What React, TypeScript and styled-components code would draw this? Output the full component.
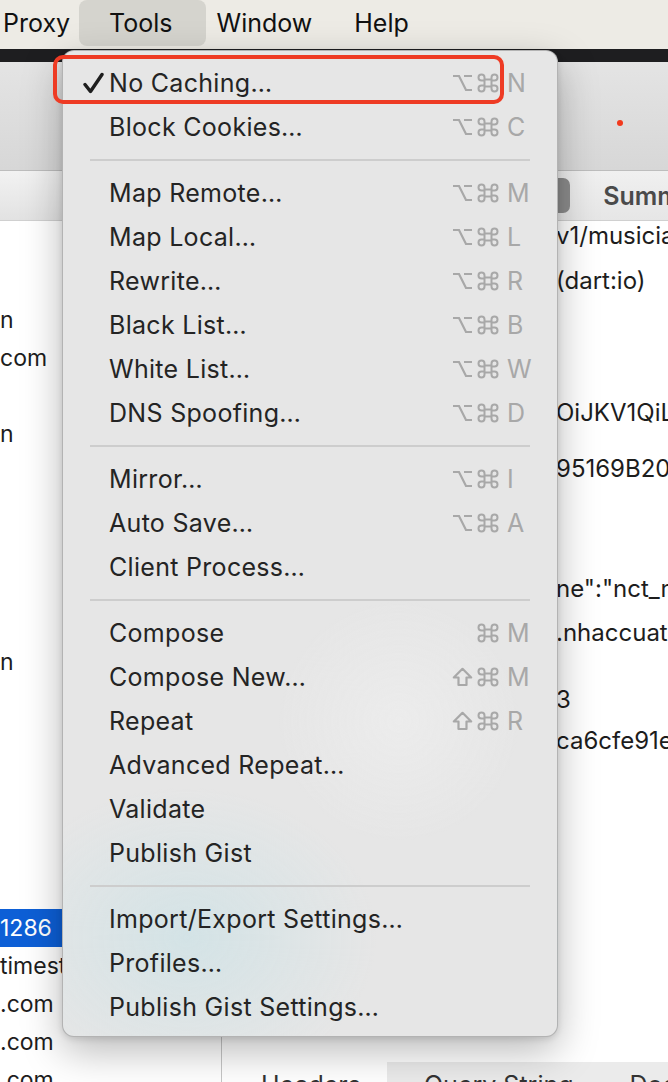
import styled, { createGlobalStyle } from "styled-components";

const GlobalStyle = createGlobalStyle`
  html, body {
    margin: 0;
    padding: 0;
    width: 668px;
    height: 1082px;
    overflow: hidden;
    background: #fff;
  }
  body {
    font-family: Inter, "Noto Sans", sans-serif;
    -webkit-font-smoothing: antialiased;
  }
`;

const Screen = styled.div`
  position: relative;
  width: 668px;
  height: 1082px;
  overflow: hidden;
  display: flex;
  flex-direction: column;
`;

/* ---------- top menu bar ---------- */
const MenuBar = styled.div`
  height: 49px;
  flex: none;
  display: flex;
  align-items: flex-start;
  background: #edebe5;
`;
const MenuTitle = styled.div<{ $active?: boolean; $first?: boolean }>`
  height: 46px;
  display: flex;
  align-items: center;
  font-size: 25px;
  color: #111;
  padding: ${(p) => (p.$active ? "0 33px 0 30px" : "0 21px")};
  margin: ${(p) => (p.$active ? "0 -10px 0 -12px" : p.$first ? "0 0 0 -18px" : "0")};
  background: ${(p) => (p.$active ? "#d5d4ce" : "transparent")};
  border-radius: 8px;
`;

/* ---------- app window behind ---------- */
const TitleStrip = styled.div`
  height: 13px;
  flex: none;
  background: #1e1e20;
`;
const Toolbar = styled.div`
  height: 109px;
  flex: none;
  display: flex;
  justify-content: flex-end;
  align-items: center;
  padding: 14px 45px 0 0;
  box-sizing: border-box;
  background: linear-gradient(#e4e4e4, #d7d7d7);
  border-bottom: 1px solid #bdbdbd;
`;
const RecordDot = styled.span`
  width: 6px;
  height: 6px;
  border-radius: 50%;
  background: #f2391d;
`;
const HeaderRow = styled.div`
  height: 50px;
  flex: none;
  display: grid;
  grid-template-columns: 222px 1fr;
  border-bottom: 1px solid #d0d0d0;
  box-sizing: border-box;
`;
const SideHeader = styled.div`
  background: linear-gradient(#f2f2f2, #e2e2e2);
  border-right: 1px solid #c8c8c8;
`;
const TabsHeader = styled.div`
  display: flex;
  align-items: center;
  padding-left: 179px;
  background: linear-gradient(#f0f0f0, #e6e6e6);
`;
const Segment = styled.div<{ $selected?: boolean }>`
  height: 35px;
  display: flex;
  align-items: center;
  padding: ${(p) => (p.$selected ? "0 34px 0 20px" : "0 33px")};
  border-radius: 7px;
  background: ${(p) => (p.$selected ? "#8c8c8c" : "transparent")};
  color: ${(p) => (p.$selected ? "#fff" : "#4a4a4a")};
  font-size: 25px;
  font-weight: 600;
  white-space: nowrap;
`;

const Body = styled.div`
  height: 900px;
  flex: none;
  display: grid;
  grid-template-columns: 222px 1fr;
`;
const Sidebar = styled.div`
  border-right: 1px solid #c6c6c6;
  padding-top: 4px;
  overflow: hidden;
`;
const HostRow = styled.div<{ $selected?: boolean }>`
  height: 38px;
  display: flex;
  align-items: center;
  font-size: 23px;
  white-space: nowrap;
  color: ${(p) => (p.$selected ? "#fff" : "#1d1d1d")};
  background: ${(p) => (p.$selected ? "#0d5fd6" : "transparent")};
`;

const Detail = styled.div`
  display: flex;
  flex-direction: column;
  overflow: hidden;
`;
const DetailRows = styled.div`
  flex: 1;
`;
const DetailRow = styled.div<{ $gap: number }>`
  height: 28px;
  margin-top: ${(p) => p.$gap}px;
  display: grid;
  grid-template-columns: 334px 1fr;
  align-items: center;
  font-size: 24px;
  color: #1d1d1d;
  white-space: nowrap;
`;
const Key = styled.span`
  color: #555;
  padding-left: 30px;
`;
const BottomTabs = styled.div`
  height: 59px;
  flex: none;
  display: flex;
  font-size: 25px;
  color: #333;
`;
const BottomTab = styled.div<{ $shaded?: boolean }>`
  height: 100%;
  display: flex;
  align-items: flex-start;
  box-sizing: border-box;
  padding: ${(p) => (p.$shaded ? "8px 0 0 37px" : "8px 0 0 39px")};
  width: ${(p) => (p.$shaded ? "auto" : "165px")};
  flex: ${(p) => (p.$shaded ? "1" : "none")};
  gap: 56px;
  background: ${(p) => (p.$shaded ? "#ebebeb" : "transparent")};
  white-space: nowrap;
`;

/* ---------- dropdown ---------- */
const Menu = styled.div`
  position: absolute;
  top: 50px;
  left: 62px;
  width: 496px;
  box-sizing: border-box;
  padding: 10px 0 7px;
  border: 1px solid rgba(0, 0, 0, 0.22);
  border-radius: 12px;
  background:
    radial-gradient(ellipse 190px 150px at 25% 90%, rgba(205, 226, 230, 0.75), rgba(205, 226, 230, 0) 100%),
    radial-gradient(circle 120px at 68% 68%, rgba(240, 240, 240, 0.6), rgba(240, 240, 240, 0) 100%),
    #e6e6e6;
  box-shadow: 0 14px 40px rgba(0, 0, 0, 0.28), 0 2px 6px rgba(0, 0, 0, 0.12);
  z-index: 10;
`;
const Item = styled.div`
  position: relative;
  height: 44px;
  display: grid;
  grid-template-columns: 46px 1fr auto;
  align-items: center;
  padding-right: 22px;
  font-size: 25px;
  letter-spacing: 0.3px;
  color: #242424;
  white-space: nowrap;
`;
const Gutter = styled.span`
  display: flex;
  align-items: center;
  padding-left: 20px;
`;
const Shortcut = styled.span`
  display: flex;
  align-items: center;
  gap: 4px;
  color: #a8a8a8;
`;
const ShortKey = styled.span`
  width: 28px;
  margin-left: 4px;
  font-size: 25px;
  letter-spacing: 0;
`;
const Separator = styled.div`
  height: 22px;
  display: flex;
  align-items: center;
  padding: 0 27px;
  &::after {
    content: "";
    flex: 1;
    height: 2px;
    background: #cdcdcd;
  }
`;
const Marker = styled.span`
  position: absolute;
  left: -10px;
  top: -6px;
  width: 451px;
  height: 49px;
  box-sizing: border-box;
  border: 4px solid #ee3b24;
  border-radius: 10px;
  pointer-events: none;
`;

type Mod = "opt" | "cmd" | "shift";
type Entry = { label: string; mods?: Mod[]; key?: string; checked?: boolean; marked?: boolean };

const OC: Mod[] = ["opt", "cmd"];
const SC: Mod[] = ["shift", "cmd"];

const sections: Entry[][] = [
  [
    { label: "No Caching…", mods: OC, key: "N", checked: true, marked: true },
    { label: "Block Cookies…", mods: OC, key: "C" },
  ],
  [
    { label: "Map Remote…", mods: OC, key: "M" },
    { label: "Map Local…", mods: OC, key: "L" },
    { label: "Rewrite…", mods: OC, key: "R" },
    { label: "Black List…", mods: OC, key: "B" },
    { label: "White List…", mods: OC, key: "W" },
    { label: "DNS Spoofing…", mods: OC, key: "D" },
  ],
  [
    { label: "Mirror…", mods: OC, key: "I" },
    { label: "Auto Save…", mods: OC, key: "A" },
    { label: "Client Process…" },
  ],
  [
    { label: "Compose", mods: ["cmd"], key: "M" },
    { label: "Compose New…", mods: SC, key: "M" },
    { label: "Repeat", mods: SC, key: "R" },
    { label: "Advanced Repeat…" },
    { label: "Validate" },
    { label: "Publish Gist" },
  ],
  [
    { label: "Import/Export Settings…" },
    { label: "Profiles…" },
    { label: "Publish Gist Settings…" },
  ],
];

const hosts = [
  "", "", "n", "com", "", "n", "", "", "", "", "", "n", "", "", "", "", "", "",
  "1286", "timest", ".com", ".com", ".com",
];

const details = [
  { k: "URL", v: "v1/musician", gap: 0 },
  { k: "Client", v: "(dart:io)", gap: 17 },
  { k: "Authorization", v: "OiJKV1QiLCJ", gap: 104 },
  { k: "Device", v: "95169B20", gap: 28 },
  { k: "Body", v: "ne\":\"nct_m", gap: 92 },
  { k: "Host", v: ".nhaccuatui", gap: 16 },
  { k: "Length", v: "3", gap: 39 },
  { k: "Token", v: "ca6cfe91e", gap: 13 },
];

function Check() {
  return (
    <svg width="21" height="22" viewBox="0 0 21 22">
      <path d="M2 12.5 L7.5 19.5 L19 2.5" fill="none" stroke="#1e1e1e" strokeWidth="3.4" strokeLinecap="round" strokeLinejoin="round" />
    </svg>
  );
}

function ModIcon({ kind }: { kind: Mod }) {
  const common = { fill: "none", stroke: "#a8a8a8", strokeWidth: 2.2, strokeLinejoin: "round" as const };
  if (kind === "shift") {
    return (
      <svg width="21" height="20" viewBox="0 0 21 20">
        <path d="M10.5 1.8 L19.2 10.5 L14.5 10.5 L14.5 18 L6.5 18 L6.5 10.5 L1.8 10.5 Z" {...common} />
      </svg>
    );
  }
  if (kind === "opt") {
    return (
      <svg width="21" height="20" viewBox="0 0 21 20">
        <path d="M1 3 L7 3 L14 17 L20 17 M12 3 L20 3" {...common} strokeLinejoin="miter" />
      </svg>
    );
  }
  return (
    <svg width="22" height="20" viewBox="0 0 22 20">
      <path
        d="M7.5 6.5 L14.5 6.5 L14.5 13.5 L7.5 13.5 Z M7.5 6.5 L7.5 4.5 A3 3 0 1 0 4.5 7.5 L7.5 7.5 M14.5 6.5 L14.5 4.5 A3 3 0 1 1 17.5 7.5 L14.5 7.5 M7.5 13.5 L7.5 15.5 A3 3 0 1 1 4.5 12.5 L7.5 12.5 M14.5 13.5 L14.5 15.5 A3 3 0 1 0 17.5 12.5 L14.5 12.5"
        {...common}
        strokeWidth={2}
      />
    </svg>
  );
}

export default function App() {
  return (
    <>
      <GlobalStyle />
      <Screen>
        <MenuBar>
          <MenuTitle $first>Proxy</MenuTitle>
          <MenuTitle $active>Tools</MenuTitle>
          <MenuTitle>Window</MenuTitle>
          <MenuTitle>Help</MenuTitle>
        </MenuBar>
        <TitleStrip />
        <Toolbar>
          <RecordDot />
        </Toolbar>
        <HeaderRow>
          <SideHeader />
          <TabsHeader>
            <Segment $selected>Overview</Segment>
            <Segment>Summary</Segment>
          </TabsHeader>
        </HeaderRow>
        <Body>
          <Sidebar>
            {hosts.map((h, i) => (
              <HostRow key={i} $selected={i === 18}>{h}</HostRow>
            ))}
          </Sidebar>
          <Detail>
            <DetailRows>
              {details.map((d) => (
                <DetailRow key={d.k} $gap={d.gap}>
                  <Key>{d.k}</Key>
                  <span>{d.v}</span>
                </DetailRow>
              ))}
            </DetailRows>
            <BottomTabs>
              <BottomTab>Headers</BottomTab>
              <BottomTab $shaded>
                <span>Query String</span>
                <span>Document</span>
              </BottomTab>
            </BottomTabs>
          </Detail>
        </Body>

        <Menu>
          {sections.map((sec, si) => (
            <div key={si}>
              {si > 0 && <Separator />}
              {sec.map((e) => (
                <Item key={e.label}>
                  <Gutter>{e.checked && <Check />}</Gutter>
                  <span>{e.label}</span>
                  {e.key ? (
                    <Shortcut>
                      {e.mods?.map((m) => <ModIcon key={m} kind={m} />)}
                      <ShortKey>{e.key}</ShortKey>
                    </Shortcut>
                  ) : (
                    <span />
                  )}
                  {e.marked && <Marker />}
                </Item>
              ))}
            </div>
          ))}
        </Menu>
      </Screen>
    </>
  );
}
